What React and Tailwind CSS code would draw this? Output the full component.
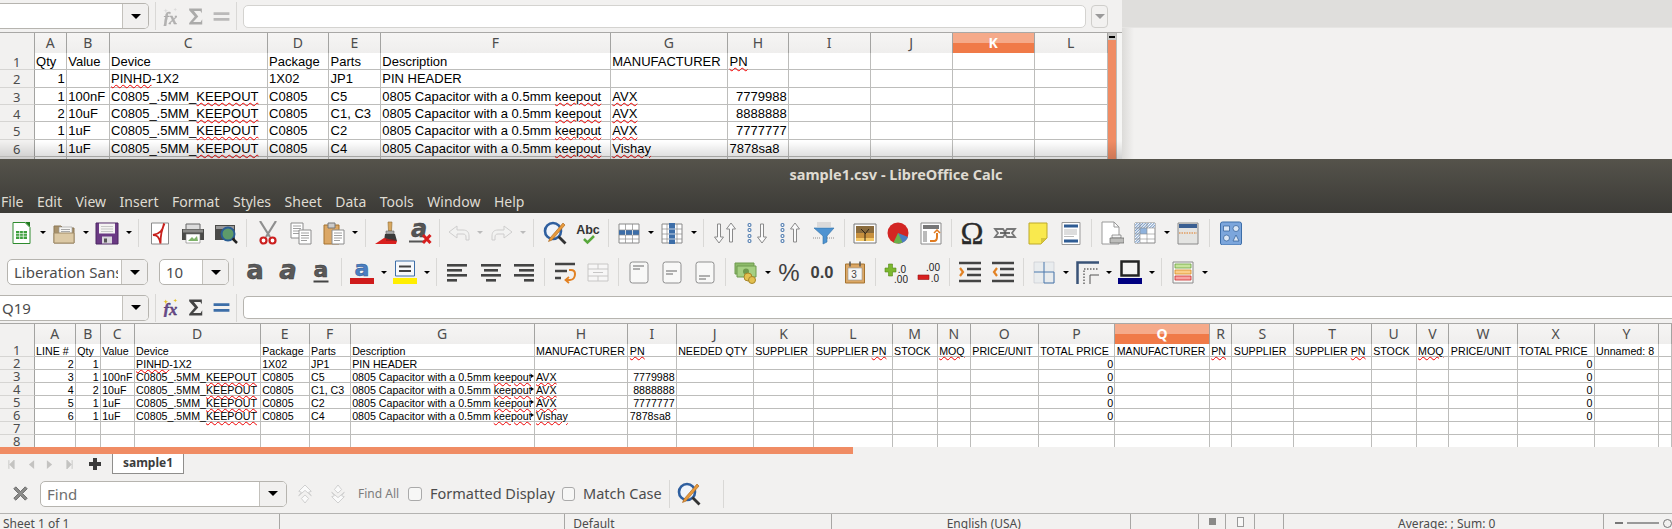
const UI = 'font-["Noto_Sans",sans-serif]'

// ---- icons (all drawn on a 24 box) ----
const I = ({ children, off, small }) => (
  <svg viewBox="0 0 24 24" className={`${small ? 'w-[19px] h-[19px]' : 'w-[24px] h-[24px]'} shrink-0 ${off ? 'opacity-40 grayscale' : ''}`}>
    {children}
  </svg>
)

const NewDoc = () => (
  <I>
    <path d="M4 1.500h12l5 5v16H4z" fill="#fff" stroke="#2e8b2e" />
    <path d="M16 1h5v5z" fill="#1f7a1f" />
    <path d="M7 10h11v8H7z" fill="#3c9f3c" />
    <path d="M7 12.600h11M7 15.200h11M10.600 10v8M14.300 10v8" stroke="#fff" strokeWidth=".7" />
  </I>
)
const Folder = () => (
  <I>
    <path d="M2 5h7l2 2h11v15H2z" fill="#a8926c" stroke="#8b7755" />
    <path d="M7 6h13v8H7z" fill="#f6f5f3" stroke="#999" strokeWidth=".6" />
    <path d="M9 8.500h9M9 10.500h9" stroke="#888" strokeWidth=".7" />
    <path d="M2 12h20v10H2z" fill="#dcc9a5" stroke="#a08c69" />
  </I>
)
const Save = () => (
  <I>
    <path d="M1 2h22v21H1z" fill="#6b3a84" stroke="#4d2762" />
    <path d="M4 2.500h16v10H4z" fill="#f4f3f2" />
    <path d="M6 5.500h12M6 8h12M6 10.500h12" stroke="#bbb" strokeWidth=".8" />
    <path d="M7 15.500h10v7H7z" fill="#d9d6dc" />
    <path d="M9 17.500h3v4H9z" fill="#555" />
  </I>
)
const Pdf = () => (
  <I>
    <path d="M3.500 2h17v21h-17z" fill="#fff" stroke="#8a8a8a" />
    <path d="M16 2.500c-1 7-4 10-11 11.500 4 0 6 1.500 7.500 8.500 0-7 .5-13 4-20" fill="none" stroke="#c8201c" strokeWidth="1.800" />
  </I>
)
const Print = () => (
  <I>
    <path d="M5 3h14v6H5z" fill="#dcdcdc" stroke="#666" />
    <path d="M1 8h22v11H1z" fill="#4a4a48" />
    <path d="M2 8.500h20v3H2z" fill="#8a8a88" />
    <path d="M5 13h14v9H5z" fill="#fff" stroke="#777" strokeWidth=".6" />
    <path d="M7 20l4-4 2 2 3-3 1 5z" fill="#7fb36a" />
  </I>
)
const Preview = () => (
  <I>
    <path d="M1 4h20v15H1z" fill="#4a4a48" />
    <path d="M2 5h18v3H2z" fill="#999" />
    <circle cx="14" cy="13" r="6.500" fill="#5d9a6a" stroke="#2a5d94" strokeWidth="2" />
    <path d="M18.500 17.500l4.500 4.500" stroke="#222" strokeWidth="2.500" />
  </I>
)
const Cut = () => (
  <I>
    <path d="M4 0l10 16M20 0L10 16" stroke="#8f8f8f" strokeWidth="2.200" />
    <circle cx="7.500" cy="19.500" r="3" fill="#fff" stroke="#cc1f1f" strokeWidth="2.200" />
    <circle cx="16.500" cy="19.500" r="3" fill="#fff" stroke="#cc1f1f" strokeWidth="2.200" />
  </I>
)
const Copy = () => (
  <I>
    <path d="M2 2h12v15H2z" fill="#fff" stroke="#8c8c8c" />
    <path d="M4 5h8M4 7.500h8M4 10h8M4 12.500h6" stroke="#888" strokeWidth=".8" />
    <path d="M10 9h12v14H10z" fill="#fff" stroke="#8c8c8c" />
    <path d="M12 12h8M12 14.500h8M12 17h8M12 19.500h6" stroke="#888" strokeWidth=".8" />
  </I>
)
const Paste = () => (
  <I>
    <path d="M2 4h15v19H2z" fill="#dba765" stroke="#a5732f" />
    <path d="M6 2h7v5H6z" fill="#ccc" stroke="#777" />
    <path d="M10 9h12v14H10z" fill="#fff" stroke="#8c8c8c" />
    <path d="M12 12h8M12 14.500h8M12 17h8M12 19.500h6" stroke="#888" strokeWidth=".8" />
  </I>
)
const Brush = () => (
  <I>
    <path d="M13 1h4l-.5 9h-3z" fill="#d9a85f" stroke="#8e6a30" strokeWidth=".6" />
    <path d="M11 10h8v3h-8z" fill="#aaa" stroke="#666" strokeWidth=".6" />
    <path d="M10 13h10l2 7H9z" fill="#3a3a3a" />
    <path d="M0 23l9-6 13 3-1 3z" fill="#d9201e" />
    <path d="M11 19h9" stroke="#7a1a1a" strokeWidth="1" />
  </I>
)
const Clear = () => (
  <I>
    <text x="11" y="16" textAnchor="middle" fontFamily="DejaVu Sans" fontStyle="italic" fontWeight="700" fontSize="24" fill="#555" stroke="#333" strokeWidth=".4">a</text>
    <path d="M1 20.500h15" stroke="#555" strokeWidth="2" />
    <path d="M15 14l7.500 8M22.500 14l-7.500 8" stroke="#d81e1e" strokeWidth="3" />
  </I>
)
const Undo = () => (
  <I off>
    <path d="M10 5L2 11l8 6v-4h6c2 0 3 1 3 3v3h3v-4c0-4-2-6-6-6h-6z" fill="#f4f4f4" stroke="#999" />
  </I>
)
const Redo = () => (
  <I off>
    <path d="M14 5l8 6-8 6v-4H8c-2 0-3 1-3 3v3H2v-4c0-4 2-6 6-6h6z" fill="#f4f4f4" stroke="#999" />
  </I>
)
const Find = () => (
  <I>
    <circle cx="10" cy="10" r="8" fill="#f0f4fa" stroke="#2f5f9f" strokeWidth="2.600" />
    <path d="M15.500 15.500l7 7" stroke="#333" strokeWidth="2.800" />
    <path d="M20 2L7 17l-1.500 3.500L9 19 22 4z" fill="#e89a3c" stroke="#a55e14" strokeWidth=".6" />
  </I>
)
const Spell = () => (
  <I>
    <text x="12" y="13" textAnchor="middle" fontFamily="Liberation Sans" fontWeight="700" fontSize="12.500" fill="#333">Abc</text>
    <path d="M8 18l3.500 3.500L18 15" fill="none" stroke="#59a83c" strokeWidth="2.500" />
  </I>
)
const TblRow = () => (
  <I>
    <path d="M2 3h20v19H2z" fill="#fff" stroke="#8a8a8a" />
    <path d="M2 9h20v5H2z" fill="#3d6ea8" />
    <path d="M2 9h20M2 14h20M2 18h20M8.500 3v19M15.500 3v19" stroke="#8a8a8a" strokeWidth=".7" />
    <path d="M8.500 9v5M15.500 9v5" stroke="#fff" strokeWidth=".7" />
  </I>
)
const TblCol = () => (
  <I>
    <path d="M2 3h20v19H2z" fill="#fff" stroke="#8a8a8a" />
    <path d="M2 8h20M2 13h20M2 18h20M7 3v19M17 3v19" stroke="#8a8a8a" strokeWidth=".7" />
    <path d="M9 2h6v21H9z" fill="#3d6ea8" />
    <path d="M9 8h6M9 13h6M9 18h6" stroke="#fff" strokeWidth=".7" />
  </I>
)
const Down = ({ x = 0 }) => (
  <path transform={`translate(${x} 0)`} d="M4.500 3h3v13h3l-4.500 6-4.500-6h3z" fill="#fafafa" stroke="#8a8a8a" />
)
const Up = ({ x = 0 }) => (
  <path transform={`translate(${x} 0)`} d="M6 2l4.500 6h-3v13h-3V8h-3z" fill="#fafafa" stroke="#8a8a8a" />
)
const Dots = () => (
  <g fill="#fff" stroke="#4b78ad" strokeWidth="1.100">
    <circle cx="3.500" cy="4" r="1.500" />
    <circle cx="3.500" cy="9" r="1.500" />
    <circle cx="3.500" cy="15" r="1.500" />
    <circle cx="3.500" cy="20" r="1.500" />
  </g>
)
const Sort = () => (
  <I>
    <Down x={0} />
    <Up x={12} />
  </I>
)
const SortAsc = () => (
  <I>
    <Dots />
    <Down x={10} />
  </I>
)
const SortDesc = () => (
  <I>
    <Dots />
    <Up x={10} />
  </I>
)
const Filter = () => (
  <I>
    <path d="M5 1h14v5H5z" fill="#ccc" opacity=".6" />
    <path d="M2 7h20l-7 8v6l-4 2v-8z" fill="#4e93d1" stroke="#2f6ea6" strokeWidth=".6" />
    <path d="M1 17h8M15 17h8" stroke="#777" strokeWidth=".8" strokeDasharray="1 1" />
  </I>
)
const Picture = () => (
  <I>
    <path d="M1 3h22v19H1z" fill="#fff" stroke="#777" />
    <path d="M3 5h18v15H3z" fill="#c7903e" />
    <path d="M3 5h18v7H3z" fill="#8a6b3c" />
    <path d="M3 17h18v3H3z" fill="#f3c766" />
    <path d="M12 20v-8l-4-4M12 13l4-5" stroke="#2f2415" strokeWidth="1" fill="none" />
  </I>
)
const Chart = () => (
  <I>
    <circle cx="12" cy="12" r="10.500" fill="#d32523" />
    <path d="M12 12l10 4c-1.500 4-5 6.500-10 6.500z" fill="#4a7ec0" />
    <path d="M12 12l4.500 9.500c-1.500.7-3 1-4.500 1-1.500 0-3-.3-4.500-1z" fill="#6bb04a" />
  </I>
)
const Pivot = () => (
  <I>
    <path d="M2 2h20v21H2z" fill="#fff" stroke="#8a8a8a" />
    <path d="M4 4h16v4H4z" fill="#777" />
    <path d="M4 10h4v11H4z" fill="#bbb" />
    <path d="M11 20h4c2 0 3-2 3-4v-4" fill="none" stroke="#e07b20" strokeWidth="2" />
    <path d="M15 12l3-3 3 3" fill="none" stroke="#e07b20" strokeWidth="1.500" />
  </I>
)
const Omega = () => (
  <I>
    <text x="12" y="22.500" textAnchor="middle" fontFamily="Liberation Serif" fontSize="31" fill="#2a2a2a" stroke="#2a2a2a" strokeWidth=".3">Ω</text>
  </I>
)
const Link = () => (
  <I>
    <path d="M2 8h8l2 3 2-3h8l-3 4 3 4h-8l-2-3-2 3H2l3-4z" fill="none" stroke="#777" strokeWidth="1.800" />
    <path d="M7 12h10" stroke="#444" strokeWidth="1.500" />
  </I>
)
const Note = () => (
  <I>
    <path d="M3 2h18v15l-6 6H3z" fill="#f9e94e" stroke="#bda92a" />
    <path d="M21 17h-6v6z" fill="#d7c63a" />
  </I>
)
const HeadFoot = () => (
  <I>
    <path d="M3 1.500h18v22H3z" fill="#fff" stroke="#999" />
    <path d="M5 3.500h14v3H5zM5 18.500h14v3H5z" fill="#2f5c94" />
    <path d="M5 9h13M5 11h13M5 13h13M5 15.500h10" stroke="#aaa" strokeWidth=".8" />
  </I>
)
const PrintRange = () => (
  <I>
    <path d="M2 1h12l5 5v17H2z" fill="#fff" stroke="#999" />
    <path d="M14 1v5h5" fill="none" stroke="#999" />
    <path d="M12 14h9v3h-9z" fill="#f4f4f4" stroke="#777" strokeWidth=".7" />
    <path d="M10 17h14v5H10z" fill="#bdbdbb" stroke="#666" strokeWidth=".7" />
  </I>
)
const Freeze = () => (
  <I>
    <defs>
      <pattern id="hatch" width="2" height="2" patternUnits="userSpaceOnUse" patternTransform="rotate(45)">
        <rect width="2" height="2" fill="#fff" />
        <rect width="1" height="2" fill="#7a9cc6" />
      </pattern>
    </defs>
    <path d="M2 2h20v20H2z" fill="#fff" stroke="#8a8a8a" />
    <path d="M2 2h20v5H7v15H2z" fill="url(#hatch)" />
    <path d="M7 7h7v6H7z" fill="#8fb2dc" />
    <path d="M2 7h20M2 13h20M2 18h20M7 2v20M14 2v20" stroke="#8a8a8a" strokeWidth=".6" />
  </I>
)
const Split = () => (
  <I>
    <path d="M2 2h20v21H2z" fill="#e4e4e2" stroke="#8a8a8a" />
    <path d="M3 3h18v4H3z" fill="#3a5f92" />
    <path d="M3 12h18" stroke="#e07b20" strokeWidth="1" strokeDasharray="1.500 1" />
  </I>
)
const Shapes = () => (
  <I>
    <rect x="1.500" y="1" width="21" height="23" rx="2" fill="#7ca6dc" stroke="#3d6ea8" />
    <path d="M4.500 5h6v5h-6z" fill="#dbe7f5" stroke="#2d5a94" strokeWidth=".7" />
    <circle cx="17" cy="7.500" r="3" fill="#dbe7f5" stroke="#2d5a94" strokeWidth=".7" />
    <circle cx="7.500" cy="17" r="3" fill="#dbe7f5" stroke="#2d5a94" strokeWidth=".7" />
    <path d="M14 20l6 0-3-6z" fill="#dbe7f5" stroke="#2d5a94" strokeWidth=".7" />
  </I>
)
const LetterA = ({ italic, under, size = 26, y = 19 }) => (
  <I>
    <text x="12" y={y} textAnchor="middle" fontFamily="DejaVu Sans" fontWeight="700" fontStyle={italic ? 'italic' : 'normal'} fontSize={size} fill="#5a5a5a" stroke="#333" strokeWidth=".5">a</text>
    {under && <path d="M4.500 21.500h15" stroke="#444" strokeWidth="2" />}
  </I>
)
const FontColor = () => (
  <I>
    <text x="12" y="16" textAnchor="middle" fontFamily="DejaVu Sans" fontWeight="700" fontSize="22" fill="#4b7fc2" stroke="#2d5a94" strokeWidth=".5">a</text>
    <path d="M0 18h24v6H0z" fill="#cf1b1b" />
  </I>
)
const BgColor = () => (
  <I>
    <path d="M2.500 1h19v15h-19z" fill="#f6f8fb" stroke="#3d6ea8" />
    <path d="M6 6.500h12M6 11h12" stroke="#444" strokeWidth="2" />
    <path d="M0 18h24v6H0z" fill="#ffee00" />
  </I>
)
const Lines = ({ rows }) => (
  <I>
    {rows.map(([x, w], i) => (
      <rect key={i} x={x} y={4 + i * 5} width={w} height="2.600" fill="#444" />
    ))}
  </I>
)
const Wrap = () => (
  <I>
    <path d="M2 4h20M2 11h12M2 18h6" stroke="#444" strokeWidth="2.400" />
    <path d="M16 10h2c3 0 4 2 4 4s-1 6-5 6h-4" fill="none" stroke="#e28224" strokeWidth="2" />
    <path d="M16 17l-3.500 3 3.500 3" fill="none" stroke="#e28224" strokeWidth="1.800" />
  </I>
)
const Merge = () => (
  <I off>
    <path d="M2 4h20v17H2z" fill="#fff" stroke="#888" />
    <path d="M2 9h20M2 16h20M12 4v5M12 16v5M7 12.500h10" stroke="#888" />
  </I>
)
const VAlign = ({ y }) => (
  <I>
    <rect x="3" y="2" width="18" height="21" rx="2.500" fill="#f8f8f7" stroke="#8f8f8f" />
    <path d={`M6 ${y}h11M6 ${y + 3}h7`} stroke="#666" strokeWidth="1" />
  </I>
)
const Currency = () => (
  <I>
    <path d="M1 3h19v11H1z" fill="#8dbb6a" stroke="#6f9a4e" />
    <path d="M3 6h19v11H3z" fill="#a5cf82" stroke="#6f9a4e" />
    <circle cx="12" cy="11.500" r="3" fill="#6f9a4e" />
    <circle cx="14" cy="17" r="4" fill="#e3c04f" stroke="#a6862a" />
    <circle cx="18" cy="20" r="3.500" fill="#e3c04f" stroke="#a6862a" />
  </I>
)
const Percent = () => (
  <I>
    <text x="12" y="20.500" textAnchor="middle" fontFamily="Liberation Sans" fontSize="24" fill="#3f3f3f">%</text>
  </I>
)
const NumFmt = () => (
  <I>
    <text x="12" y="18" textAnchor="middle" fontFamily="Liberation Sans" fontWeight="700" fontSize="16.500" fill="#3f3f3f">0.0</text>
  </I>
)
const DateIco = () => (
  <I>
    <path d="M2.500 4h19v19h-19z" fill="#dba765" stroke="#a5732f" />
    <path d="M5 8h14v12H5z" fill="#f6f6f4" stroke="#999" strokeWidth=".6" />
    <path d="M7 1.500v5M17 1.500v5" stroke="#555" strokeWidth="1.500" />
    <text x="11" y="18" textAnchor="middle" fontFamily="Liberation Sans" fontSize="10" fill="#444">3</text>
  </I>
)
const AddDec = () => (
  <I>
    <path d="M1 8h3.500V4h4v4H12v4H8.500v4h-4v-4H1z" fill="#7cb82f" stroke="#55871a" strokeWidth=".6" />
    <text x="18" y="13" textAnchor="middle" fontFamily="Liberation Sans" fontSize="10" fill="#222">.0</text>
    <text x="17" y="23" textAnchor="middle" fontFamily="Liberation Sans" fontSize="10" fill="#222">.00</text>
  </I>
)
const DelDec = () => (
  <I>
    <text x="16" y="11" textAnchor="middle" fontFamily="Liberation Sans" fontSize="10" fill="#222">.00</text>
    <path d="M1 15h11v4.500H1z" fill="#d92020" stroke="#951515" strokeWidth=".6" />
    <text x="18" y="22" textAnchor="middle" fontFamily="Liberation Sans" fontSize="10" fill="#222">.0</text>
  </I>
)
const Indent = ({ flip }) => (
  <I>
    <path d="M1 3h22M9 9h14M9 15h14M1 21h22" stroke="#444" strokeWidth="2.400" />
    <path d={flip ? 'M6 8l-3 4 3 4' : 'M2 8l3 4-3 4'} fill="none" stroke="#e28224" strokeWidth="2.200" />
  </I>
)
const Borders = () => (
  <I>
    <path d="M2 2h20v21H2z" fill="#e9ecee" stroke="#c3c8cd" strokeWidth=".6" />
    <path d="M12 2v21M2 12h20" stroke="#4b78ad" strokeWidth="1" />
    <path d="M12 23h10V12" fill="none" stroke="#4b78ad" strokeWidth="1" />
  </I>
)
const BorderStyle = () => (
  <I>
    <path d="M2.500 24V2.500H24" fill="none" stroke="#3a5377" strokeWidth="2.500" />
    <path d="M9 24V9h15" fill="none" stroke="#222" strokeWidth="1" strokeDasharray="1.500 1.500" />
    <path d="M15 24v-9h9" fill="none" stroke="#555" strokeWidth="1" />
  </I>
)
const BorderColor = () => (
  <I>
    <path d="M3.500 1.500h17v14h-17z" fill="#f2f1f0" stroke="#222" strokeWidth="2.500" />
    <path d="M0 18h24v6H0z" fill="#000080" />
  </I>
)
const Cond = () => (
  <I>
    <path d="M2 2h20v21H2z" fill="#f7f7f6" stroke="#8a8a8a" />
    <path d="M4 4h16v4H4z" fill="#c7e49c" stroke="#6aa23a" strokeWidth=".8" />
    <path d="M4 10h16v4H4z" fill="#fbcd8a" stroke="#d88a1e" strokeWidth=".8" />
    <path d="M4 16h16v4H4z" fill="#f8a3a3" stroke="#cd2b2b" strokeWidth=".8" />
  </I>
)
const Fx = ({ off }) => (
  <I off={off} small>
    <text x="12" y="21" textAnchor="middle" fontFamily="Liberation Serif" fontStyle="italic" fontWeight="700" fontSize="21" fill="#6b4a8f" stroke="#3f2f55" strokeWidth=".4">fx</text>
    <path d="M6 2l1 2 2 .5-2 1-1 2-1-2-2-1 2-.5zM18 1l.8 1.500 1.700.5-1.700.8-.8 1.700-.8-1.700-1.700-.8 1.700-.5z" fill="#e6c229" />
  </I>
)
const Sigma = ({ off }) => (
  <I off={off} small>
    <path d="M4 2h16v6l-1.800-3H10l5.500 7-6.500 7h9.500l2-3.500V22H4v-1.800L11 12 4 4z" fill="#444" />
  </I>
)
const Equals = ({ off }) => (
  <I off={off} small>
    <path d="M2 6.500h20v3.500H2zM2 14h20v3.500H2z" fill="#3d6ea8" />
  </I>
)

// ---- toolbar bits ----
const Slot = ({ children }) => <div className="w-[33px] h-[30px] shrink-0 flex items-center justify-center">{children}</div>
const Sep = ({ w = 'w-[8px]' }) => (
  <div className={`${w} h-[28px] shrink-0 flex justify-center`}>
    <div className="w-px h-full bg-[#d9d8d6]" />
  </div>
)
const Arrow = ({ off }) => (
  <div className="w-[10px] h-[30px] shrink-0 flex items-center justify-center">
    <div className={`border-x-[3px] border-t-[3px] border-x-transparent ${off ? 'border-t-[#bbb]' : 'border-t-black'}`} />
  </div>
)
const Combo = ({ text, box, btn }) => (
  <div className={`${box} h-[26px] shrink-0 flex rounded-[5px] border border-[#b6b4af] bg-white overflow-hidden`}>
    <div className="flex-1 min-w-0 pl-[6px] pr-[3px]">
      <div className={`text-[15px] leading-[24px] text-[#4c4c4c] whitespace-nowrap overflow-hidden ${UI}`}>{text}</div>
    </div>
    <div className={`${btn} shrink-0 bg-[#f1f0ef] border-l border-[#c3c1bc] flex items-center justify-center`}>
      <div className="border-x-[5px] border-t-[5px] border-x-transparent border-t-black" />
    </div>
  </div>
)

const FormulaBar = ({ name, off, input, h }) => (
  <div className={`${h} bg-[#f2f1f0] border-b border-[#a9a8a6] flex items-center`}>
    <div className="w-[149px] h-[26px] shrink-0 flex rounded-r-[5px] border border-l-0 border-[#b6b4af] bg-white overflow-hidden">
      <div className={`flex-1 pl-[2px] text-[15px] leading-[24px] text-[#4c4c4c] ${UI}`}>{name}</div>
      <div className="w-[26px] bg-[#f1f0ef] border-l border-[#c3c1bc] flex items-center justify-center">
        <div className="border-x-[5px] border-t-[5px] border-x-transparent border-t-black" />
      </div>
    </div>
    <Sep w="w-[13px]" />
    <div className="w-[17px] flex justify-center shrink-0"><Fx off={off} /></div>
    <div className="w-[33px] flex justify-center shrink-0"><Sigma off={off} /></div>
    <div className="w-[18px] flex justify-center shrink-0"><Equals off={off} /></div>
    <Sep w="w-[13px]" />
    {input}
  </div>
)

// ---- sheet ----
const Wave = ({ children }) => (
  <span className="underline decoration-wavy decoration-[#f00000] decoration-1 underline-offset-[1px]">{children}</span>
)

const Keep = () => <>C0805_.5MM_<Wave>KEEPOUT</Wave></>
const Pinhd = () => <><Wave>PINHD</Wave>-1X2</>
const Desc = () => <>0805 Capacitor with a 0.5mm <Wave>keepout</Wave></>
const Avx = () => <Wave>AVX</Wave>
const Vishay = () => <Wave>Vishay</Wave>
const Pn = () => <Wave>PN</Wave>
const SupPn = () => <>SUPPLIER <Wave>PN</Wave></>
const Moq = () => <Wave>MOQ</Wave>

const topCols = 'grid grid-cols-[34.600px_32.200px_42.800px_158px_61.500px_51.700px_230px_117.300px_60.600px_82.100px_81.800px_82.100px_73px]'
const lowCols = 'grid grid-cols-[34.600px_41.100px_25px_33.900px_126.100px_48.900px_41.100px_183.900px_93.800px_48.300px_77.100px_60.700px_78.200px_45.100px_33.100px_68px_76.400px_94.500px_22.600px_61.300px_78.100px_44.900px_32.800px_68.200px_77px_64.600px_1fr]'

const topHead = ['A', 'B', 'C', 'D', 'E', 'F', 'G', 'H', 'I', 'J', 'K', 'L']
const topRows = [
  ['Qty', 'Value', 'Device', 'Package', 'Parts', 'Description', 'MANUFACTURER', <Pn />],
  [1, '', <Pinhd />, '1X02', 'JP1', 'PIN HEADER', '', ''],
  [1, '100nF', <Keep />, 'C0805', 'C5', <Desc />, <Avx />, 7779988],
  [2, '10uF', <Keep />, 'C0805', 'C1, C3', <Desc />, <Avx />, 8888888],
  [1, '1uF', <Keep />, 'C0805', 'C2', <Desc />, <Avx />, 7777777],
  [1, '1uF', <Keep />, 'C0805', 'C4', <Desc />, <Vishay />, '7878sa8'],
  [],
]

const lowHead = ['A', 'B', 'C', 'D', 'E', 'F', 'G', 'H', 'I', 'J', 'K', 'L', 'M', 'N', 'O', 'P', 'Q', 'R', 'S', 'T', 'U', 'V', 'W', 'X', 'Y', '']
const low = (line, qty, val, dev, pack, parts, desc, maker, pn) => [
  line, qty, val, dev, pack, parts, desc, maker, pn, '', '', '', '', '', '', 0, '', '', '', '', '', '', '', 0,
]
const lowRows = [
  ['LINE #', 'Qty', 'Value', 'Device', 'Package', 'Parts', 'Description', 'MANUFACTURER', <Pn />, 'NEEDED QTY', 'SUPPLIER', <SupPn />, 'STOCK', <Moq />, 'PRICE/UNIT', 'TOTAL PRICE', 'MANUFACTURER', <Pn />, 'SUPPLIER', <SupPn />, 'STOCK', <Moq />, 'PRICE/UNIT', 'TOTAL PRICE', 'Unnamed: 8'],
  low(2, 1, '', <Pinhd />, '1X02', 'JP1', 'PIN HEADER', '', ''),
  low(3, 1, '100nF', <Keep />, 'C0805', 'C5', <Desc />, <Avx />, 7779988),
  low(4, 2, '10uF', <Keep />, 'C0805', 'C1, C3', <Desc />, <Avx />, 8888888),
  low(5, 1, '1uF', <Keep />, 'C0805', 'C2', <Desc />, <Avx />, 7777777),
  low(6, 1, '1uF', <Keep />, 'C0805', 'C4', <Desc />, <Vishay />, '7878sa8'),
  [],
  [],
]

const Head = ({ cols, labels, active }) => (
  <div className={`${cols} h-[20px] border-b border-[#a3a3a1]`}>
    <div className="bg-[#f2f1f0] border-r border-[#a3a3a1]" />
    {labels.map((l, i) => (
      <div
        key={i}
        className={
          l === active
            ? `text-center text-[14px] leading-[20px] font-bold text-white bg-gradient-to-b from-[#f5aa8a] from-50% to-[#f07a48] to-50% border-r border-[#a3a3a1] ${UI}`
            : `text-center text-[14px] leading-[20px] text-[#4d4d4d] bg-gradient-to-b from-[#f6f5f4] to-[#efeeed] border-r border-[#a3a3a1] ${UI}`
        }
      >
        {l}
      </div>
    ))}
  </div>
)

// cells carry no background of their own: grid items paint as a unit, and a white
// cell would hide the wavy underline that hangs down from the row above
const Rows = ({ cols, rows, count, rowH, text, overflowAt, numCls }) =>
  rows.map((r, y) => (
    <div key={y} className={`${cols} ${rowH} bg-white`}>
      <div className={`${rowH} bg-[#f2f1f0] border-r border-b border-r-[#a3a3a1] border-b-[#d6d5d3] text-center text-[#4d4d4d] ${numCls} ${UI}`}>
        {y + 1}
      </div>
      {Array.from({ length: count }).map((_, x) => {
        const v = r[x] ?? ''
        const isNum = typeof v === 'number'
        const cut = x === overflowAt && y > 1 && y < 6
        return (
          <div
            key={x}
            className={`${rowH} border-r border-b border-[#bdbdbb] whitespace-nowrap text-black font-["Liberation_Sans",sans-serif] ${text} ${isNum ? 'text-right pr-[1px]' : 'pl-[1.500px]'} ${cut ? 'flex items-start' : ''}`}
          >
            {cut ? (
              <>
                <span className="flex-1 min-w-0 overflow-x-clip">{v}</span>
                <span className="shrink-0 self-center border-y-[2.500px] border-l-[3px] border-y-transparent border-l-black" />
              </>
            ) : (
              v
            )}
          </div>
        )
      })}
    </div>
  ))

export default function App() {
  return (
    <div className="w-[1672px] h-[529px] overflow-hidden bg-[#f2f1f0]">
      {/* window behind */}
      <div className="h-[159px] flex">
        <div className="relative w-[1122px] shrink-0 overflow-hidden">
          <FormulaBar
            name=""
            off
            h="h-[33px]"
            input={
              <>
                <div className="w-[843px] h-[23px] shrink-0 rounded-[5px] border border-[#d4d3d0] bg-white" />
                <div className="ml-[5px] w-[17px] h-[23px] shrink-0 rounded-[4px] border border-[#cfcecb] flex items-center justify-center">
                  <div className="border-x-[5px] border-t-[5px] border-x-transparent border-t-[#9a9a9a]" />
                </div>
              </>
            }
          />
          <div className="flex">
            <div className="w-[1108px] shrink-0">
              <Head cols={topCols} labels={topHead} active="K" />
              <Rows
                cols={topCols}
                rows={topRows}
                count={12}
                rowH="h-[17.330px]"
                text="text-[13px] leading-[18px]"
                numCls="text-[13px] leading-[18px]"
              />
            </div>
            <div className="w-[8px] shrink-0 bg-[#f08c64]">
              <div className="h-[7px] bg-[#c9c8c6] flex items-center justify-center">
                <div className="w-[6px] h-[2px] bg-black" />
              </div>
            </div>
            <div className="flex-1 bg-[#f6f6f5] border-l border-[#bdbdbb]" />
          </div>
          <div className="absolute left-0 right-0 bottom-0 h-[18px] bg-gradient-to-b from-transparent to-[#00000026]" />
        </div>
        <div className="flex-1 flex flex-col bg-gradient-to-r from-[#dcdbd9] to-[#f2f1f0] to-[12px]">
          <div className="h-[28px] bg-[#dfdedc] border-b border-[#e6e5e3]" />
        </div>
      </div>

      {/* main window */}
      <div className="h-[54px] bg-gradient-to-b from-[#55534b] to-[#3c3b37]">
        <div className={`h-[31px] pl-[120px] text-center text-[14.500px] leading-[31px] font-bold text-[#dfdbd2] ${UI}`}>
          sample1.csv - LibreOffice Calc
        </div>
        <div className={`flex gap-[13.500px] pl-[1px] pt-[2px] text-[14px] leading-[20px] text-[#dfdbd2] ${UI}`}>
          {['File', 'Edit', 'View', 'Insert', 'Format', 'Styles', 'Sheet', 'Data', 'Tools', 'Window', 'Help'].map(m => (
            <span key={m}>{m}</span>
          ))}
        </div>
      </div>

      <div className="h-[39px] flex items-center pl-[4.500px]">
        <Slot><NewDoc /></Slot><Arrow />
        <Slot><Folder /></Slot><Arrow />
        <Slot><Save /></Slot><Arrow />
        <Sep w="w-[10px]" />
        <Slot><Pdf /></Slot><Slot><Print /></Slot><Slot><Preview /></Slot>
        <Sep w="w-[8.500px]" />
        <Slot><Cut /></Slot><Slot><Copy /></Slot><Slot><Paste /></Slot><Arrow />
        <Sep w="w-[10px]" />
        <Slot><Brush /></Slot><Slot><Clear /></Slot>
        <Sep w="w-[6px]" />
        <Slot><Undo /></Slot><Arrow off />
        <Slot><Redo /></Slot><Arrow off />
        <Sep w="w-[10.500px]" />
        <Slot><Find /></Slot><Slot><Spell /></Slot>
        <Sep />
        <Slot><TblRow /></Slot><Arrow />
        <Slot><TblCol /></Slot><Arrow />
        <Sep w="w-[10px]" />
        <Slot><Sort /></Slot><Slot><SortAsc /></Slot><Slot><SortDesc /></Slot><Slot><Filter /></Slot>
        <Sep />
        <Slot><Picture /></Slot><Slot><Chart /></Slot><Slot><Pivot /></Slot>
        <Sep />
        <Slot><Omega /></Slot><Slot><Link /></Slot><Slot><Note /></Slot><Slot><HeadFoot /></Slot>
        <Sep />
        <Slot><PrintRange /></Slot><Slot><Freeze /></Slot><Arrow />
        <Slot><Split /></Slot>
        <Sep w="w-[10px]" />
        <Slot><Shapes /></Slot>
      </div>

      <div className="h-[40px] flex items-center pl-[7px]">
        <Combo text="Liberation Sans" box="w-[141px]" btn="w-[26px]" />
        <div className="w-[11px] shrink-0" />
        <Combo text="10" box="w-[70px]" btn="w-[26px]" />
        <Sep w="w-[9.500px]" />
        <Slot><LetterA /></Slot><Slot><LetterA italic /></Slot><Slot><LetterA under size={22} y={17} /></Slot>
        <Sep />
        <Slot><FontColor /></Slot><Arrow />
        <Slot><BgColor /></Slot><Arrow />
        <Sep w="w-[10px]" />
        <Slot><Lines rows={[[1, 20], [1, 15], [1, 20], [1, 10]]} /></Slot>
        <Slot><Lines rows={[[2, 20], [5, 14], [2, 20], [7, 10]]} /></Slot>
        <Slot><Lines rows={[[2, 20], [7, 15], [2, 20], [12, 10]]} /></Slot>
        <Sep />
        <Slot><Wrap /></Slot><Slot><Merge /></Slot>
        <Sep />
        <Slot><VAlign y={6} /></Slot><Slot><VAlign y={11} /></Slot><Slot><VAlign y={16} /></Slot>
        <Sep />
        <Slot><Currency /></Slot><Arrow />
        <Slot><Percent /></Slot><Slot><NumFmt /></Slot><Slot><DateIco /></Slot>
        <Sep />
        <Slot><AddDec /></Slot><Slot><DelDec /></Slot>
        <Sep />
        <Slot><Indent /></Slot><Slot><Indent flip /></Slot>
        <Sep />
        <Slot><Borders /></Slot><Arrow />
        <Slot><BorderStyle /></Slot><Arrow />
        <Slot><BorderColor /></Slot><Arrow />
        <Sep w="w-[10px]" />
        <Slot><Cond /></Slot><Arrow />
      </div>

      <FormulaBar
        name="Q19"
        h="h-[32px]"
        input={<div className="flex-1 h-[23px] rounded-l-[5px] border border-r-0 border-[#b6b4af] bg-white" />}
      />

      <div className="h-[123px] overflow-hidden">
        <Head cols={lowCols} labels={lowHead} active="Q" />
        <Rows
          cols={lowCols}
          rows={lowRows}
          count={26}
          rowH="h-[13px]"
          text="text-[10.670px] leading-[14px]"
          overflowAt={6}
          numCls="text-[13px] leading-[13px]"
        />
      </div>

      <div className="h-[7px] w-[853px] bg-[#f08c64]" />

      <div className="h-[20px] flex items-center">
        <div className="w-[112px] shrink-0 flex items-center pl-[8px] gap-[10px] text-[#c4c3c1]">
          <svg viewBox="0 0 8 10" className="w-[7px] h-[9px]"><path d="M1 0v10M7 0L2 5l5 5z" stroke="currentColor" fill="currentColor" /></svg>
          <svg viewBox="0 0 8 10" className="w-[7px] h-[9px] ml-[3px]"><path d="M7 0L1 5l6 5z" fill="currentColor" /></svg>
          <svg viewBox="0 0 8 10" className="w-[7px] h-[9px] ml-[1px]"><path d="M1 0l6 5-6 5z" fill="currentColor" /></svg>
          <svg viewBox="0 0 8 10" className="w-[7px] h-[9px] ml-[3px]"><path d="M1 0l5 5-5 5zM7 0v10" stroke="currentColor" fill="currentColor" /></svg>
          <svg viewBox="0 0 12 12" className="w-[12px] h-[12px] ml-[6px]"><path d="M4 0h4v4h4v4H8v4H4V8H0V4h4z" fill="#3a3a3a" /></svg>
        </div>
        <div className={`w-[72px] h-[20px] bg-white border border-t-0 border-[#8f8e8c] text-center text-[12px] leading-[18px] font-bold text-[#3c3c3c] ${UI}`}>
          sample1
        </div>
      </div>

      <div className="h-[40px] flex items-center border-b border-[#b4b3b1]">
        <div className="w-[40px] shrink-0 flex justify-center">
          <svg viewBox="0 0 20 20" className="w-[19px] h-[19px]"><path d="M3 5l2-2 5 5 5-5 2 2-5 5 5 5-2 2-5-5-5 5-2-2 5-5z" fill="#8d8d8b" stroke="#666" /></svg>
        </div>
        <Combo text={<span className="text-[#6e6e6e]">Find</span>} box="w-[247px]" btn="w-[27px]" />
        <div className="w-[33px] ml-[1px] shrink-0 flex justify-center"><svg viewBox="0 0 20 22" className="w-[18px] h-[20px]"><path d="M10 1l7 7-3 1 3 4-7-6-7 6 3-4-3-1zM10 12l4 4-4 5-4-5z" fill="#fafafa" stroke="#ccc" /></svg></div>
        <div className="w-[34px] shrink-0 flex justify-center"><svg viewBox="0 0 20 22" className="w-[18px] h-[20px]"><path d="M10 21l7-7-3-1 3-4-7 6-7-6 3 4-3 1zM10 10l4-4-4-5-4 5z" fill="#fafafa" stroke="#ccc" /></svg></div>
        <div className={`w-[50px] ml-[3px] shrink-0 text-[12px] text-[#7c7c7c] ${UI}`}>Find All</div>
        <div className="w-[14px] h-[14px] shrink-0 rounded-[3px] border border-[#aaa] bg-[#f7f7f6]" />
        <div className={`w-[140px] pl-[8px] shrink-0 text-[14.500px] text-[#4c4c4c] whitespace-nowrap ${UI}`}>Formatted Display</div>
        <div className="w-[13px] h-[14px] shrink-0 rounded-[3px] border border-[#aaa] bg-[#f7f7f6]" />
        <div className={`w-[93px] pl-[8px] shrink-0 text-[14.500px] text-[#4c4c4c] whitespace-nowrap ${UI}`}>Match Case</div>
        <Sep w="w-[2px]" />
        <div className="w-[38px] shrink-0 flex justify-center"><Find /></div>
        <Sep w="w-[30px]" />
      </div>

      <div className={`h-[15px] flex text-[12px] leading-[20px] text-[#4c4c4c] whitespace-nowrap overflow-hidden ${UI}`}>
        <div className="w-[280px] pl-[3px] border-r border-[#a8a7a5]">Sheet 1 of 1</div>
        <div className="w-[286px] border-r border-[#a8a7a5]" />
        <div className="w-[267px] pl-[8px] border-r border-[#a8a7a5]">Default</div>
        <div className="w-[299px] pl-[6px] text-center border-r border-[#a8a7a5]">English (USA)</div>
        <div className="w-[68px] border-r border-[#a8a7a5]" />
        <div className="w-[28px] border-r border-[#a8a7a5] flex justify-center pt-[4px]"><div className="w-[7px] h-[7px] bg-[#8a8a88]" /></div>
        <div className="w-[29px] border-r border-[#a8a7a5] flex justify-center pt-[3px]"><div className="w-[7px] h-[10px] bg-[#f8f8f7] border border-[#999]" /></div>
        <div className="w-[29px] border-r border-[#a8a7a5]" />
        <div className="w-[320px] pl-[6px] text-center border-r border-[#a8a7a5]">Average: ; Sum: 0</div>
        <div className="flex-1 flex items-center pl-[11px] pt-[3px] gap-[4px]">
          <div className="w-[8px] h-[2px] bg-[#777]" />
          <div className="w-[32px] h-[2px] bg-[#999]" />
          <div className="w-[9px] h-[9px] rounded-full border border-[#777] bg-[#f2f1f0]" />
        </div>
      </div>
    </div>
  )
}
